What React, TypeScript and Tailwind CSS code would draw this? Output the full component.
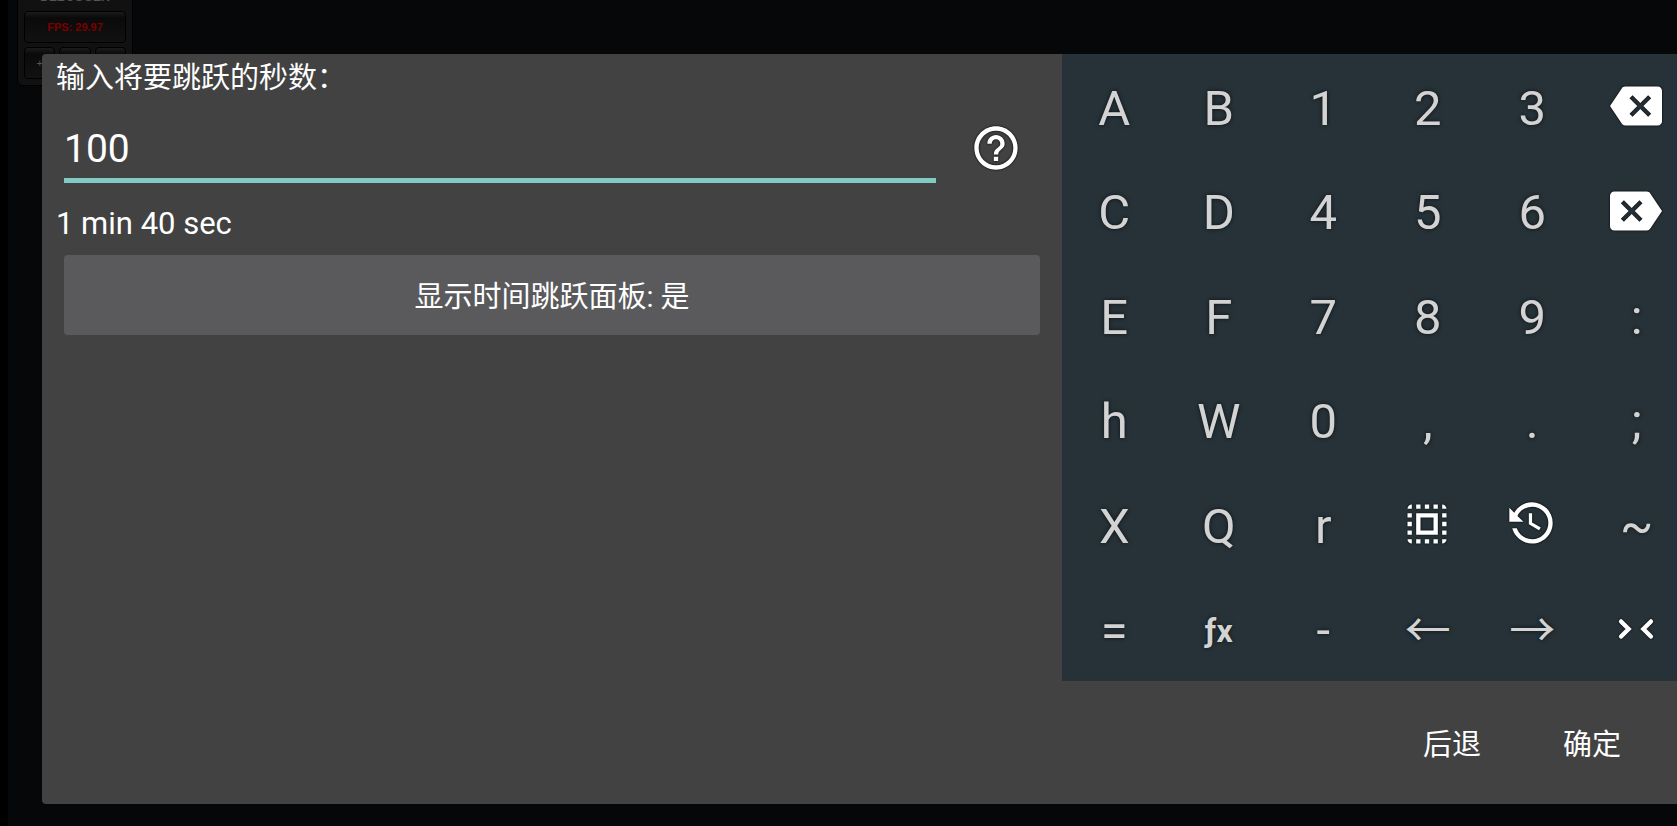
import React from "react";

const paths = {
  backspace:
    "M22 3H7c-.69 0-1.23.35-1.59.88L0 12l5.41 8.11c.36.53.9.89 1.59.89h15c1.1 0 2-.9 2-2V5c0-1.1-.9-2-2-2zm-3 12.59L17.59 17 14 13.41 10.41 17 9 15.59 12.59 12 9 8.41 10.41 7 14 10.59 17.59 7 19 8.41 15.41 12 19 15.59z",
  del: "M2 3h15c.69 0 1.23.35 1.59.88L24 12l-5.41 8.11c-.36.53-.9.89-1.59.89H2c-1.1 0-2-.9-2-2V5c0-1.1.9-2 2-2zm3 12.59L6.41 17 10 13.41 13.59 17 15 15.59 11.41 12 15 8.41 13.59 7 10 10.59 6.41 7 5 8.41 8.59 12 5 15.59z",
  selectAll:
    "M3 5h2V3c-1.1 0-2 .9-2 2zm0 8h2v-2H3v2zm4 8h2v-2H7v2zM3 9h2V7H3v2zm10-6h-2v2h2V3zm6 0v2h2c0-1.1-.9-2-2-2zM5 21v-2H3c0 1.1.9 2 2 2zm-2-4h2v-2H3v2zM9 3H7v2h2V3zm2 18h2v-2h-2v2zm8-8h2v-2h-2v2zm0 8c1.1 0 2-.9 2-2h-2v2zm0-12h2V7h-2v2zm0 8h2v-2h-2v2zm-4 4h2v-2h-2v2zm0-16h2V3h-2v2zM7 17h10V7H7v10zm2-8h6v6H9V9z",
  history:
    "M11,7V12.11L15.71,14.9L16.5,13.62L12.5,11.25V7M12.5,2C8.97,2 5.91,3.92 4.27,6.77L2,4.5V11H8.5L5.75,8.25C6.96,5.73 9.5,4 12.5,4A7.5,7.5 0 0,1 20,11.5A7.5,7.5 0 0,1 12.5,19C9.23,19 6.47,16.91 5.44,14H3.34C4.44,18.03 8.11,21 12.5,21C17.74,21 22,16.75 22,11.5A9.5,9.5 0 0,0 12.5,2Z",
  collapse: "M5.1 8.5 8.6 12l-3.5 3.5M18.9 8.5 15.4 12l3.5 3.5",
  help: "M11 18h2v-2h-2v2zm1-16C6.48 2 2 6.48 2 12s4.48 10 10 10 10-4.48 10-10S17.52 2 12 2zm0 18c-4.41 0-8-3.59-8-8s3.59-8 8-8 8 3.59 8 8-3.59 8-8 8zm0-14c-2.21 0-4 1.79-4 4h2c0-1.1.9-2 2-2s2 .9 2 2c0 2-3 1.75-3 5h2c0-2.25 3-2.5 3-5 0-2.21-1.79-4-4-4z",
};

type IconName = keyof typeof paths;

function Icon({ name }: { name: IconName }) {
  const outlined = name === "collapse";
  return (
    <svg
      viewBox="0 0 24 24"
      aria-hidden="true"
      className="size-[52px] overflow-visible drop-shadow-[0_0_1px_#000]"
    >
      <path
        d={paths[name]}
        fill={outlined ? "none" : "white"}
        stroke={outlined ? "white" : "none"}
        strokeWidth="2"
        strokeLinecap="round"
      />
    </svg>
  );
}

type Key = string | { icon: IconName; label: string };

const keys: Key[] = [
  "A", "B", "1", "2", "3", { icon: "backspace", label: "Backspace" },
  "C", "D", "4", "5", "6", { icon: "del", label: "Delete" },
  "E", "F", "7", "8", "9", ":",
  "h", "W", "0", ",", ".", ";",
  "X", "Q", "r", { icon: "selectAll", label: "Select all" }, { icon: "history", label: "History" }, "~",
  "=", "ƒx", "-", "←", "→", { icon: "collapse", label: "Collapse" },
];

const keySizes: Record<string, string> = {
  "ƒx": "text-[32px] font-bold",
  "←": "text-[46px]",
  "→": "text-[46px]",
};

function KeyButton({ value }: { value: Key }) {
  if (typeof value !== "string") {
    return (
      <button type="button" aria-label={value.label} className="flex items-center justify-center pr-[2px]">
        <Icon name={value.icon} />
      </button>
    );
  }
  return (
    <button
      type="button"
      className={
        "flex items-center justify-center pt-1 [text-shadow:0_0_4px_#000a] " +
        (keySizes[value] ?? "text-[49px]")
      }
    >
      {value}
    </button>
  );
}

function DebugPanel() {
  const cell = "rounded border border-black bg-linear-to-b from-[#1c1c1c] via-[#0a0a0a] via-20% to-[#121212]";
  return (
    <div className="absolute -top-4 left-[9px] flex w-[116px] flex-col gap-1 rounded-md border border-black bg-[#111] px-[6px] pb-[6px] font-['Liberation_Sans'] text-[11px]">
      <div className="flex h-[22px] items-end justify-center text-xs font-bold leading-5 text-[#555]">DEBUGGER</div>
      <div className={"flex h-[32px] items-center justify-center font-bold text-[#7a0000] " + cell}>FPS: 29.97</div>
      <div className="grid h-[32px] grid-cols-3 gap-1 text-[#555]">
        <div className={"flex items-center justify-center " + cell}>+</div>
        <div className={cell} />
        <div className={cell} />
      </div>
    </div>
  );
}

export default function App() {
  return (
    <div className="relative min-h-screen overflow-hidden border-l-8 border-black bg-[#050708] pt-[54px] pb-[22px] font-[Roboto,'Noto_Sans_CJK_SC',sans-serif] text-white">
      <DebugPanel />
      <main className="relative -mr-3 ml-[34px] flex min-h-[750px] flex-col rounded bg-[#424242]">
        <div className="flex">
          <section className="flex min-w-0 flex-1 flex-col px-[14px]">
            <label htmlFor="seconds" className="pt-[2px] text-[29px] leading-[44px]">输入将要跳跃的秒数：</label>
            <div className="flex items-center pt-3 pr-[26px] pl-2">
              <input
                id="seconds"
                defaultValue="100"
                className="h-[71px] min-w-0 flex-1 border-b-5 border-[#80cbc4] bg-transparent pt-2 text-[39px] outline-none"
              />
              <button type="button" aria-label="Help" className="ml-[34px]">
                <Icon name="help" />
              </button>
            </div>
            <p className="pt-[22px] text-[31px] leading-[38px]">1 min 40 sec</p>
            <button type="button" className="mx-2 mt-3 h-[80px] rounded bg-[#5a5a5c] pt-[6px] text-[29px]">
              显示时间跳跃面板: 是
            </button>
          </section>
          <section className="grid h-[627px] w-[627px] shrink-0 grid-cols-6 grid-rows-6 bg-[#263238] text-[#d3d3d3]">
            {keys.map((key, i) => (
              <KeyButton key={i} value={key} />
            ))}
          </section>
        </div>
        <footer className="flex flex-1 items-center justify-end gap-[82px] pt-[6px] pr-[68px] text-[29px]">
          <button type="button">后退</button>
          <button type="button">确定</button>
        </footer>
      </main>
    </div>
  );
}
